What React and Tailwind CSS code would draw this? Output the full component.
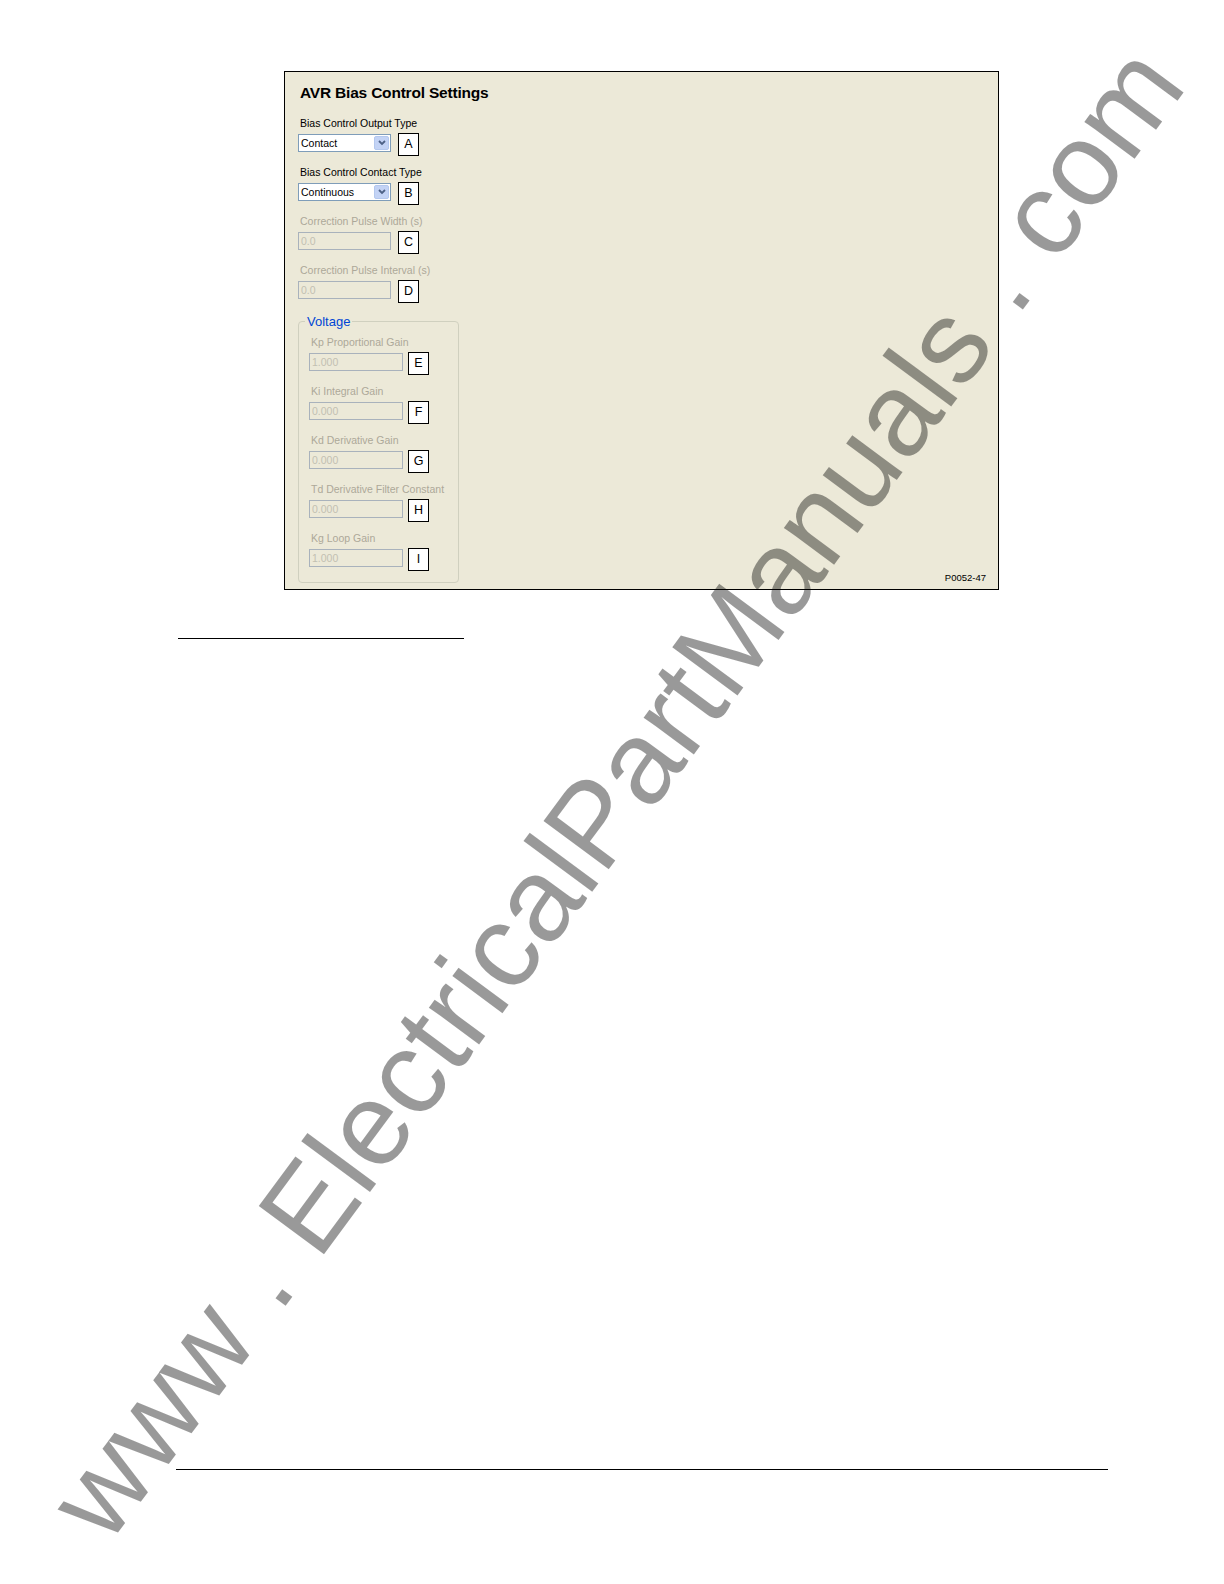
import React from "react";

const FONT = { fontFamily: '"Liberation Sans", Arial, sans-serif' };

function LetterBox({ letter }) {
  return (
    <div className="w-[21px] h-[23px] border border-black bg-white flex items-center justify-center text-[12.5px] leading-none text-black">
      {letter}
    </div>
  );
}

function Dropdown({ value }) {
  return (
    <div className="mt-[1px] w-[93px] h-[18px] border border-[#7F9DB9] bg-white flex items-center justify-between pl-[2px] pr-[1px]">
      <span className="text-[10.5px] leading-none text-black">{value}</span>
      <div className="w-[15px] h-[14px] rounded-[2px] bg-[#C3D3F5] border border-[#B4C8EE] flex items-center justify-center">
        <svg width="8" height="6" viewBox="0 0 8 6">
          <path d="M1 1 L4 4 L7 1" fill="none" stroke="#4D6185" strokeWidth="1.8" />
        </svg>
      </div>
    </div>
  );
}

function DisabledInput({ value, width = "w-[93px]" }) {
  return (
    <div className={`mt-[1px] ${width} h-[18px] border border-[#A9B2BC] bg-[#ECE9D8] flex items-center pl-[2px]`}>
      <span className="text-[10.5px] leading-none text-[#C2C0B2]">{value}</span>
    </div>
  );
}

function Field({ label, disabled, children, letter, gap = "gap-[7px]" }) {
  return (
    <div className="flex flex-col mb-[10px]">
      <div
        className={`h-[13px] leading-[13px] text-[10.5px] pl-[2px] whitespace-nowrap ${
          disabled ? "text-[#ACA899]" : "text-black"
        }`}
      >
        {label}
      </div>
      <div className={`flex items-start mt-[3px] ${gap}`}>
        {children}
        <LetterBox letter={letter} />
      </div>
    </div>
  );
}

const gains = [
  { label: "Kp Proportional Gain", value: "1.000", letter: "E" },
  { label: "Ki Integral Gain", value: "0.000", letter: "F" },
  { label: "Kd Derivative Gain", value: "0.000", letter: "G" },
  { label: "Td Derivative Filter Constant", value: "0.000", letter: "H" },
  { label: "Kg Loop Gain", value: "1.000", letter: "I" },
];

export default function App() {
  return (
    <div className="relative w-full h-[1584px] bg-white overflow-hidden" style={FONT}>
      <div className="flex flex-col items-start pt-[71px]">
        {/* Screenshot figure */}
        <div className="relative ml-[284px] w-[715px] h-[519px] border border-black bg-[#ECE9D8]">
          <div className="pl-[13px] pt-[12px]">
            <h1 className="text-[15.5px] leading-[17px] font-bold tracking-[-0.2px] text-black ml-[2px]">
              AVR Bias Control Settings
            </h1>

            <div className="mt-[16px] flex flex-col">
              <Field label="Bias Control Output Type" letter="A">
                <Dropdown value="Contact" />
              </Field>
              <Field label="Bias Control Contact Type" letter="B">
                <Dropdown value="Continuous" />
              </Field>
              <Field label="Correction Pulse Width (s)" letter="C" disabled>
                <DisabledInput value="0.0" />
              </Field>
              <Field label="Correction Pulse Interval (s)" letter="D" disabled>
                <DisabledInput value="0.0" />
              </Field>

              <fieldset className="mt-[1px] w-[161px] h-[269px] border border-[#D0D0BF] rounded-[4px] p-0">
                <legend className="ml-[6px] px-[2px] text-[13px] leading-[15px] text-[#0046D5]">
                  Voltage
                </legend>
                <div className="pl-[10px] pt-[7px] flex flex-col">
                  {gains.map((g) => (
                    <Field
                      key={g.letter}
                      label={g.label}
                      letter={g.letter}
                      disabled
                      gap="gap-[5px]"
                    >
                      <DisabledInput value={g.value} width="w-[94px]" />
                    </Field>
                  ))}
                </div>
              </fieldset>
            </div>
          </div>
          <span className="absolute right-[12px] bottom-[7px] text-[9.5px] leading-none text-black">
            P0052-47
          </span>
        </div>

        <div className="ml-[178px] mt-[48px] w-[286px] border-t-[1.5px] border-black" />
        <div className="ml-[176px] mt-[830px] w-[932px] border-t border-black" />
      </div>

      {/* Watermark */}
      <div className="absolute left-[615px] top-[792px] w-0 h-0 pointer-events-none">
        <div
          className="absolute left-0 top-0 -translate-x-1/2 -translate-y-1/2 -rotate-[53.5deg] whitespace-nowrap text-[118px] leading-none text-black/40"
          style={FONT}
        >
          www . ElectricalPartManuals . com
        </div>
      </div>
    </div>
  );
}
